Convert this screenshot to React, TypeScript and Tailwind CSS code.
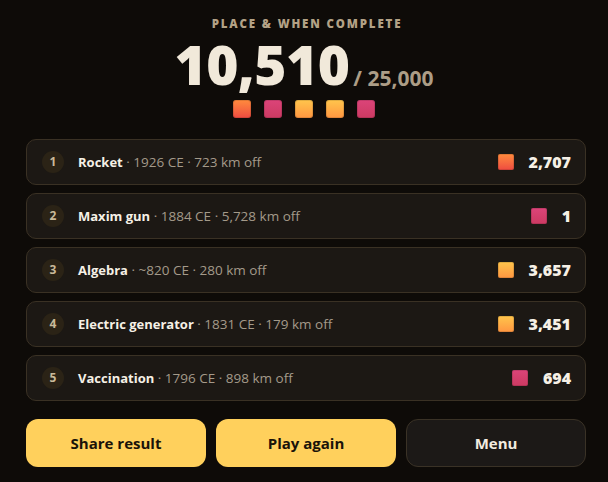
import React from "react";

type Row = { n: number; name: string; meta: string; score: string; tile: string };

const TILE_RED = "bg-gradient-to-b from-[#ff8a3d] to-[#ee4a40]";
const TILE_PINK = "bg-gradient-to-b from-[#dc4479] to-[#cc3a62]";
const TILE_GOLD = "bg-gradient-to-b from-[#ffc54c] to-[#ff9641]";

const rows: Row[] = [
  { n: 1, name: "Rocket", meta: "1926 CE · 723 km off", score: "2,707", tile: TILE_RED },
  { n: 2, name: "Maxim gun", meta: "1884 CE · 5,728 km off", score: "1", tile: TILE_PINK },
  { n: 3, name: "Algebra", meta: "~820 CE · 280 km off", score: "3,657", tile: TILE_GOLD },
  { n: 4, name: "Electric generator", meta: "1831 CE · 179 km off", score: "3,451", tile: TILE_GOLD },
  { n: 5, name: "Vaccination", meta: "1796 CE · 898 km off", score: "694", tile: TILE_PINK },
];

function Tile({ tile, size }: { tile: string; size: "lg" | "sm" }) {
  return (
    <div
      className={`${tile} ${size === "lg" ? "w-[18px] h-[18px] rounded-[3px]" : "w-4 h-4 rounded-[2px]"} shadow-[inset_0_0_0_1px_rgba(0,0,0,0.12)]`}
    />
  );
}

export default function App() {
  return (
    <div
      className="w-[608px] h-[482px] bg-[#0e0b08] overflow-hidden"
      style={{ fontFamily: '"Open Sans", "Noto Sans", sans-serif' }}
    >
      {/* Header */}
      <div className="flex flex-col items-center pt-[16px]">
        <div className="text-[11.5px] font-extrabold tracking-[0.16em] text-[#b3a286] leading-[16px] ml-[6px]">
          PLACE &amp; WHEN COMPLETE
        </div>
        <div className="flex items-end gap-[4px] mt-[6px] h-[48px]">
          <span className="text-[55px] font-extrabold text-[#f1e9da] leading-[44px] tracking-[-0.01em]">10,510</span>
          <span className="text-[21px] font-bold text-[#ac9d86] leading-[22px] -mb-[3px]">/ 25,000</span>
        </div>
        <div className="flex gap-[13px] mt-[14px]">
          <Tile tile={TILE_RED} size="lg" />
          <Tile tile={TILE_PINK} size="lg" />
          <Tile tile={TILE_GOLD} size="lg" />
          <Tile tile={TILE_GOLD} size="lg" />
          <Tile tile={TILE_PINK} size="lg" />
        </div>
      </div>

      {/* Rounds */}
      <div className="pl-[26px] pr-[22px] mt-[21px] flex flex-col gap-2">
        {rows.map((r) => (
          <div
            key={r.n}
            className="h-[46px] flex items-center pl-[15px] pr-[14px] bg-[#1c1814] border border-[#3a3124] rounded-[10px]"
          >
            <div className="w-[22px] h-[22px] rounded-full bg-[#2b2316] flex items-center justify-center text-[12px] font-bold text-[#c9b999]">
              {r.n}
            </div>
            <div className="ml-[14px] flex-1 text-[13.5px] text-[#a49a8a] whitespace-nowrap">
              <span className="text-[13px] font-bold text-[#f6f0e6]">{r.name}</span> · {r.meta}
            </div>
            <div className="flex items-center gap-[15px]">
              <Tile tile={r.tile} size="sm" />
              <div className="text-[16px] font-extrabold text-[#f6f0e6]">{r.score}</div>
            </div>
          </div>
        ))}
      </div>

      {/* Actions */}
      <div className="pl-[26px] pr-[22px] mt-[18px] grid grid-cols-3 gap-[10px]">
        <button className="h-[48px] rounded-[12px] bg-[#ffd05c] text-[15px] font-bold text-[#1a1309]">Share result</button>
        <button className="h-[48px] rounded-[12px] bg-[#ffd05c] text-[15px] font-bold text-[#1a1309]">Play again</button>
        <button className="h-[48px] rounded-[12px] bg-[#1c1917] border border-[#3a3226] text-[15px] font-bold text-[#f3ece0]">
          Menu
        </button>
      </div>
    </div>
  );
}
